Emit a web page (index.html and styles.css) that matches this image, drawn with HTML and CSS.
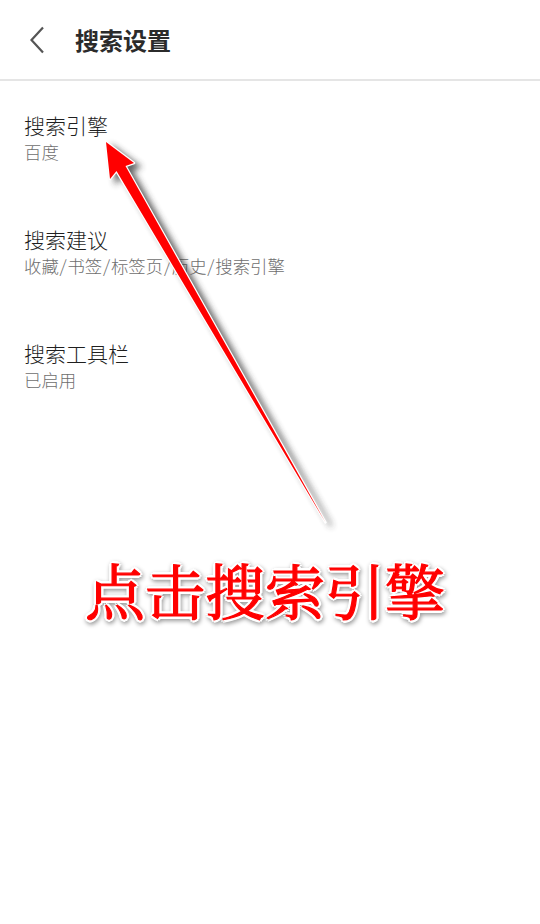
FILE: index.html
```html
<!DOCTYPE html>
<html lang="zh-CN">
<head>
    <meta charset="utf-8">
    <title>搜索设置</title>
    <link rel="stylesheet" href="styles.css">
</head>
<body>
    <div class="page">
        <div class="header">
            <svg class="back-icon" width="16" height="28" viewBox="0 0 16 28">
                <path d="M14 1.500 L2.500 14 L14 26.500" fill="none" stroke="#555" stroke-width="2.2"/>
            </svg>
            <h1 class="title">搜索设置</h1>
        </div>

        <div class="list">
            <div class="item">
                <div class="item-name">搜索引擎</div>
                <div class="item-value">百度</div>
            </div>
            <div class="item">
                <div class="item-name">搜索建议</div>
                <div class="item-value">收藏/书签/标签页/历史/搜索引擎</div>
            </div>
            <div class="item">
                <div class="item-name">搜索工具栏</div>
                <div class="item-value">已启用</div>
            </div>
        </div>

        <!-- annotation drawn on top of the screenshot -->
        <svg class="arrow" width="540" height="924" viewBox="0 0 540 924">
            <defs>
                <filter id="arrow-shadow" x="-20%" y="-20%" width="140%" height="140%">
                    <feGaussianBlur stdDeviation="3"/>
                </filter>
            </defs>
            <path class="arrow-shadow" d="M106 142 L134 163 L125.500 166 L325.500 522.500 L116.500 171 L110 179 Z" transform="translate(6 4)" filter="url(#arrow-shadow)"/>
            <path class="arrow-body" d="M106 142 L134 163 L125.500 166 L325.500 522.500 L116.500 171 L110 179 Z"/>
        </svg>
        <div class="callout">点击搜索引擎</div>
    </div>
</body>
</html>
```

FILE: styles.css
```css
* {
    box-sizing: border-box;
}
body {
    margin: 0;
    background: #fff;
    font-family: "Noto Sans CJK SC", "Noto Sans", sans-serif;
}
.page {
    position: relative;
    width: 540px;
    height: 924px;
    overflow: hidden;
}
.header {
    display: flex;
    align-items: center;
    height: 81px;
    padding-left: 29px;
    border-bottom: 2px solid #e5e5e5;
}
.back-icon {
    margin-right: 30px;
}
.title {
    margin: 0;
    font-size: 24px;
    font-weight: 700;
    color: #2b2b2b;
}
.list {
    padding-top: 28px;
}
.item {
    height: 114px;
    padding-left: 24px;
}
.item-name {
    font-size: 21px;
    line-height: 33px;
    font-weight: 300;
    color: #1f1f1f;
}
.item-value {
    margin-top: -2px;
    font-size: 17.4px;
    line-height: 24px;
    font-weight: 300;
    color: #6e6e6e;
    font-feature-settings: "hwid";
}
.arrow {
    position: absolute;
    left: 0;
    top: 0;
}
.arrow-shadow {
    fill: #333;
    stroke: #333;
    stroke-width: 2;
    opacity: 0.75;
}
.arrow-body {
    fill: #f00;
    stroke: #fff;
    stroke-width: 2.500;
    stroke-linejoin: round;
    paint-order: stroke fill;
}
.callout {
    position: absolute;
    left: 85px;
    top: 545px;
    font-family: "Noto Serif CJK SC", "Noto Sans CJK SC", serif;
    font-size: 60px;
    line-height: 88px;
    font-weight: 400;
    white-space: nowrap;
    color: #f00;
    -webkit-text-stroke: 1.2px #f00;
    text-shadow: 3px 0 0 #fff, -3px 0 0 #fff, 0 3px 0 #fff, 0 -3px 0 #fff, 2px 2px 0 #fff, -2px 2px 0 #fff, 2px -2px 0 #fff, -2px -2px 0 #fff;
    filter: drop-shadow(1px 2px 2px rgba(0,0,0,0.4));
}
```
